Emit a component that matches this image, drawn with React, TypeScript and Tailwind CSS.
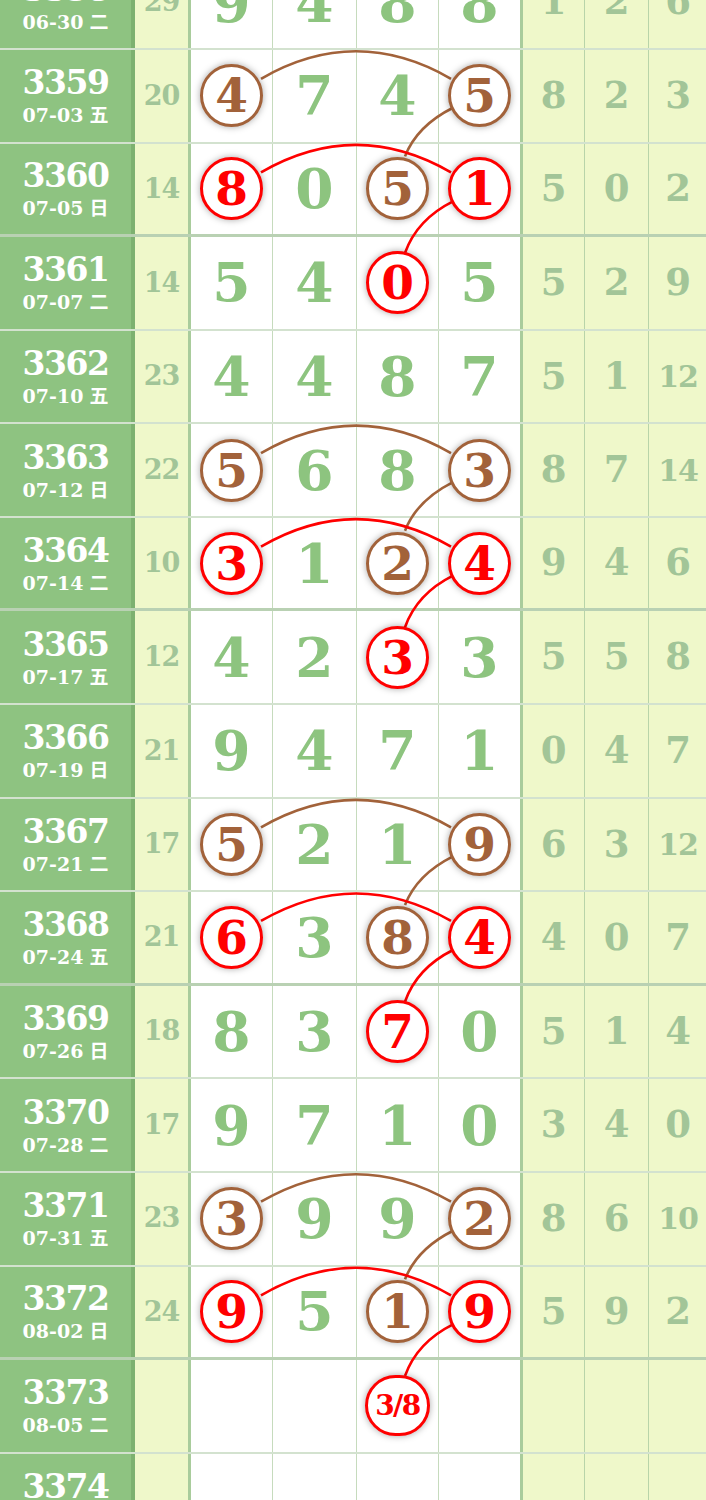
import React from 'react';

type Mark = 'r' | 'b';

interface Row {
  n: string;
  d: string;
  w: string;
  s: string;
  c: number[];
  r: number[];
  m?: Record<number, Mark>;
  guess?: string;
}

const rows: Row[] = [
  { n: '3358', d: '06-30', w: '二', s: '29', c: [9, 4, 8, 8], r: [1, 2, 6] },
  { n: '3359', d: '07-03', w: '五', s: '20', c: [4, 7, 4, 5], r: [8, 2, 3], m: { 0: 'b', 3: 'b' } },
  { n: '3360', d: '07-05', w: '日', s: '14', c: [8, 0, 5, 1], r: [5, 0, 2], m: { 0: 'r', 2: 'b', 3: 'r' } },
  { n: '3361', d: '07-07', w: '二', s: '14', c: [5, 4, 0, 5], r: [5, 2, 9], m: { 2: 'r' } },
  { n: '3362', d: '07-10', w: '五', s: '23', c: [4, 4, 8, 7], r: [5, 1, 12] },
  { n: '3363', d: '07-12', w: '日', s: '22', c: [5, 6, 8, 3], r: [8, 7, 14], m: { 0: 'b', 3: 'b' } },
  { n: '3364', d: '07-14', w: '二', s: '10', c: [3, 1, 2, 4], r: [9, 4, 6], m: { 0: 'r', 2: 'b', 3: 'r' } },
  { n: '3365', d: '07-17', w: '五', s: '12', c: [4, 2, 3, 3], r: [5, 5, 8], m: { 2: 'r' } },
  { n: '3366', d: '07-19', w: '日', s: '21', c: [9, 4, 7, 1], r: [0, 4, 7] },
  { n: '3367', d: '07-21', w: '二', s: '17', c: [5, 2, 1, 9], r: [6, 3, 12], m: { 0: 'b', 3: 'b' } },
  { n: '3368', d: '07-24', w: '五', s: '21', c: [6, 3, 8, 4], r: [4, 0, 7], m: { 0: 'r', 2: 'b', 3: 'r' } },
  { n: '3369', d: '07-26', w: '日', s: '18', c: [8, 3, 7, 0], r: [5, 1, 4], m: { 2: 'r' } },
  { n: '3370', d: '07-28', w: '二', s: '17', c: [9, 7, 1, 0], r: [3, 4, 0] },
  { n: '3371', d: '07-31', w: '五', s: '23', c: [3, 9, 9, 2], r: [8, 6, 10], m: { 0: 'b', 3: 'b' } },
  { n: '3372', d: '08-02', w: '日', s: '24', c: [9, 5, 1, 9], r: [5, 9, 2], m: { 0: 'r', 2: 'b', 3: 'r' } },
  { n: '3373', d: '08-05', w: '二', s: '', c: [], r: [], guess: '3/8' },
  { n: '3374', d: '08-07', w: '四', s: '', c: [], r: [] },
];

const ROW_H = 93.58;
const TOP = -43.6;
const BROWN = '#a2623a';
const RED = '#ff0000';

const serif = "font-['DejaVu_Serif',serif]";
const cjk = "font-['Noto_Sans_CJK_SC',sans-serif]";

const colW = ['w-[82px]', 'w-[84px]', 'w-[82px]', 'w-[81px]'];
const rightW = ['w-[62px]', 'w-[64px]', 'w-[58px]'];

function Ball({ v, mark }: { v: number; mark: Mark }) {
  const color = mark === 'r' ? 'border-[#ff0000] text-[#ff0000]' : 'border-[#a2623a] text-[#a2623a]';
  return (
    <div
      className={`relative z-10 w-[63px] h-[63px] rounded-full border-[3px] bg-white flex items-center justify-center shadow-[0_0_7px_rgba(0,0,0,0.35)] ${color}`}
    >
      <span className={`${serif} font-bold text-[47px] leading-none`}>{v}</span>
    </div>
  );
}

function DataRow({ row }: { row: Row }) {
  const thick = Number(row.n) % 4 === 0;
  const line = thick ? 'border-b-[3px] border-[#4f8c40]/40' : 'border-b-2 border-[#4f8c40]/25';
  return (
    <div className={`flex h-[93.58px] ${line}`}>
      <div className="w-[135px] shrink-0 bg-[#8ec381] border-r-4 border-r-[#7db170] flex flex-col items-center justify-center pt-[1px]">
        <div className={`${serif} font-bold text-white text-[33px] leading-[36px] tracking-[-1.5px]`}>{row.n}</div>
        <div className="text-white font-bold text-[19px] leading-[24px] mt-[1px]">
          <span className={serif}>{row.d}</span>
          <span className={`${cjk} ml-[6px]`}>{row.w}</span>
        </div>
      </div>
      <div className="w-[56px] shrink-0 bg-[#eff8ca] border-r-[3px] border-r-[#a9cc9c] flex items-center justify-center">
        <span className={`${serif} font-bold text-[27px] tracking-[-1px] text-[#a2c598]`}>{row.s}</span>
      </div>
      {colW.map((w, i) => {
        const mark = row.m?.[i];
        return (
          <div
            key={i}
            className={`${w} shrink-0 bg-white flex items-center justify-center ${i < 3 ? 'border-r border-r-[#c6dbbd]' : ''}`}
          >
            {row.guess && i === 2 ? (
              <div className="relative z-10 w-[65px] h-[61px] rounded-full border-[3px] border-[#ff0000] bg-white flex items-center justify-center shadow-[0_0_7px_rgba(0,0,0,0.35)]">
                <span className={`${serif} font-bold text-[28px] text-[#ff0000] tracking-[-1.5px]`}>{row.guess}</span>
              </div>
            ) : row.c.length === 0 ? null : mark ? (
              <Ball v={row.c[i]} mark={mark} />
            ) : (
              <span className={`${serif} font-bold text-[55px] leading-none text-[#8dc47f]`}>{row.c[i]}</span>
            )}
          </div>
        );
      })}
      <div className="w-[3px] shrink-0 bg-[#a9cc9c]" />
      {rightW.map((w, i) => {
        const v = row.r[i];
        const big = v !== undefined && v >= 10;
        return (
          <div
            key={i}
            className={`${w} shrink-0 bg-[#eff8ca] flex items-center justify-center ${i < 2 ? 'border-r border-r-[#b8d4a9]' : ''}`}
          >
            {v !== undefined && (
              <span className={`${serif} font-bold ${big ? 'text-[30px] tracking-[-1px]' : 'text-[37px]'} text-[#a2c598]`}>
                {v}
              </span>
            )}
          </div>
        );
      })}
    </div>
  );
}

function Links() {
  const yc = (k: number) => TOP + ROW_H * k + ROW_H / 2 - 1;
  const paths: { d: string; c: string }[] = [];
  [1, 5, 9, 13].forEach((k) => {
    const a = yc(k);
    const b = yc(k + 1);
    const c = yc(k + 2);
    paths.push({ d: `M 261 ${a - 17} Q 356 ${a - 72} 451 ${a - 17}`, c: BROWN });
    paths.push({ d: `M 453 ${a + 12} Q 417 ${a + 30} 405 ${b - 33}`, c: BROWN });
    paths.push({ d: `M 261 ${b - 17} Q 356 ${b - 72} 451 ${b - 17}`, c: RED });
    paths.push({ d: `M 453 ${b + 12} Q 417 ${b + 30} 405 ${c - 30}`, c: RED });
  });
  return (
    <svg className="absolute inset-0 pointer-events-none" width="706" height="1500" viewBox="0 0 706 1500">
      {paths.map((p, i) => (
        <path key={i} d={p.d} fill="none" stroke={p.c} strokeWidth={2.6} />
      ))}
    </svg>
  );
}

export default function App() {
  return (
    <div className="relative w-[706px] h-[1500px] overflow-hidden bg-white">
      <div className="mt-[-43.6px]">
        {rows.map((row) => (
          <DataRow key={row.n} row={row} />
        ))}
      </div>
      <Links />
    </div>
  );
}
